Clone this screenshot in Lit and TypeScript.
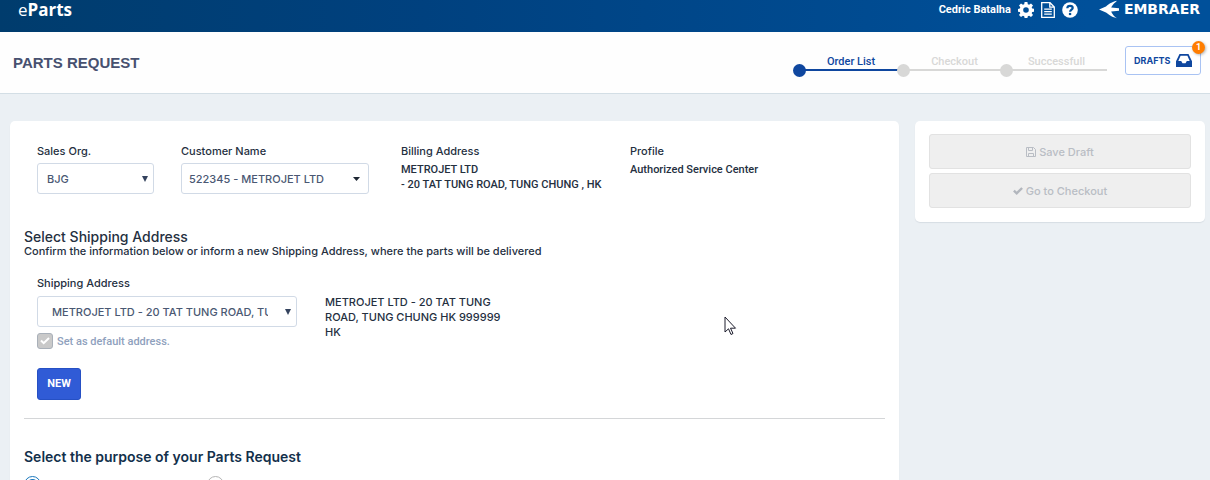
import { LitElement, html, css, svg } from "lit";
import { customElement, property } from "lit/decorators.js";
import { classMap } from "lit/directives/class-map.js";

const gearIcon = svg`<path fill="#fff" fill-rule="evenodd" d="M6.6 0h2.8l.4 2.2 1.3.5L13 1.4l2 2-1.3 1.9.5 1.3 2 .3v2.8l-2 .4-.5 1.2L15 13l-2 2-1.9-1.3-1.3.5-.4 1.8H6.600l-.4-1.800-1.300-.5L3 15l-2-2 1.300-1.700-.5-1.200L0 9.700V6.900l1.800-.3.5-1.300L1 3.400l2-2 1.900 1.300 1.300-.5zM8 5.200a2.800 2.800 0 1 0 0 5.600 2.800 2.800 0 0 0 0-5.600z"/>`;

@customElement("step-track")
export class StepTrack extends LitElement {
  @property({ type: Number }) current = 0;

  static styles = css`
    :host { display: block; }
    ol { list-style: none; margin: 0; padding: 0; display: grid; grid-template-columns: 104px 103px 101px; }
    li {
      position: relative;
      text-align: center;
      color: #d8d8d7;
      border-bottom: 2px solid #d8d8d7;
      font: 500 11px/14px Roboto, sans-serif;
    }
    li::before {
      content: "";
      position: absolute;
      left: -6px;
      bottom: -8px;
      width: 13px;
      height: 13px;
      border-radius: 50%;
      background: #d8d8d7;
    }
    .active { color: #0f479f; border-color: #0f479f; }
    .active::before { background: #0f479f; }
  `;

  render() {
    return html`<ol>
      ${["Order List", "Checkout", "Successfull"].map(
        (s, i) => html`<li class=${classMap({ active: i === this.current })}>${s}</li>`
      )}
    </ol>`;
  }
}

@customElement("app-root")
export class AppRoot extends LitElement {
  static styles = css`
    :host {
      display: block;
      height: 100vh;
      overflow: hidden;
      position: relative;
      background: #ebf0f4;
      color: #25303f;
      font: 500 11px/16px Inter, "Liberation Sans", sans-serif;
    }
    * { box-sizing: border-box; }
    svg { display: block; flex: none; }
    h1, h2, p { margin: 0; }
    button, select { font: inherit; color: inherit; }

    .top {
      display: flex;
      align-items: flex-start;
      justify-content: space-between;
      height: 32px;
      padding: 0 10px 0 18px;
      color: #fff;
      background: linear-gradient(90deg, #003c6d, #00417f 35%, #00509a 90%);
    }
    .brand { font: 400 17px/19px "Open Sans", sans-serif; color: #fff; text-decoration: none; }
    .brand b { font-weight: 700; }
    .tools { display: flex; align-items: center; height: 19px; gap: 7px; }
    .user { font: 700 11px/18px Roboto, sans-serif; }
    .tools a { color: inherit; text-decoration: none; }
    .logo { display: flex; align-items: center; gap: 5px; margin-left: 14px; font: 700 14px/19px "DejaVu Sans", sans-serif; }

    .bar {
      display: flex;
      align-items: center;
      height: 62px;
      padding: 0 9px 0 13px;
      background: #fefefe;
      border-bottom: 1px solid #d3dee5;
    }
    h1 { flex: 1; font: 700 15px/18px "Liberation Sans", sans-serif; color: #475170; }
    .drafts {
      position: relative;
      display: flex;
      align-items: center;
      justify-content: space-between;
      width: 76px;
      height: 29px;
      margin: 0 0 4px 18px;
      padding: 0 8px;
      border: 1px solid #a9c3f3;
      border-radius: 3px;
      background: #fff;
      color: #0f479f;
      font: 700 9px/12px Inter, sans-serif;
    }
    .badge {
      position: absolute;
      top: -6px;
      right: -5px;
      width: 13px;
      height: 13px;
      border-radius: 50%;
      background: #ff7d00;
      color: #fff;
      font: 700 9px/13px Roboto, sans-serif;
      box-shadow: 1px 1px 3px rgba(0, 0, 0, 0.3);
    }

    .layout {
      display: grid;
      grid-template-columns: minmax(0, 1fr) 290px;
      gap: 16px;
      align-items: start;
      padding: 27px 5px 0 10px;
    }
    .card { background: #fff; border-radius: 5px; box-shadow: 0 1px 1px rgba(40, 60, 80, 0.1); }
    .main { padding: 22px 14px 40px; }
    .side { display: grid; gap: 4px; padding: 13px 14px 14px; }
    .side button {
      display: flex;
      align-items: center;
      justify-content: center;
      gap: 3px;
      height: 35px;
      border: 1px solid #e2e2e2;
      border-radius: 3px;
      background: #efefef;
      color: #b9bdc4;
    }

    .account, .shipping { display: grid; padding-left: 13px; }
    .account { grid-template-columns: 144fr 220fr 229fr 255fr; }
    .shipping { grid-template-columns: 288fr 185fr 375fr; margin-top: 17px; }
    .label { display: block; color: #25303f; }
    .value { margin-top: 3px; font: 500 11px/15px Roboto, sans-serif; }
    .address { margin-top: 20px; line-height: 15px; }
    .pick { display: grid; align-items: center; margin: 4px 27px 0 0; }
    .wide { margin-right: 32px; }
    .ship { margin: 5px 28px 0 0; }
    .pick > * { grid-area: 1 / 1; }
    .pick svg { justify-self: end; margin-right: 6px; pointer-events: none; }
    .pick .caret { margin-right: 9px; }
    select {
      appearance: none;
      width: 100%;
      height: 31px;
      padding: 0 28px 0 9px;
      border: 1px solid #d1dae6;
      border-radius: 3px;
      background: #fff;
      color: #4a5873;
    }
    .wide select { padding-left: 7px; }
    .ship select { padding-left: 14px; }

    h2 { font: 500 14px/16px Inter, sans-serif; }
    .section { margin-top: 35px; }
    .hint { line-height: 13px; }
    .default { display: flex; align-items: flex-start; gap: 4px; margin-top: 6px; color: #8fa1bd; font: 500 11px/18px Roboto, sans-serif; }
    .tick { display: grid; }
    .tick > * { grid-area: 1 / 1; }
    .tick svg { place-self: center; pointer-events: none; }
    .tick input {
      appearance: none;
      width: 16px;
      height: 16px;
      margin: 0;
      border: 1px solid #a9b0b9;
      border-radius: 3px;
      background: #c9c9c9;
    }
    .new {
      width: 44px;
      height: 32px;
      margin: 17px 0 0 13px;
      padding: 0;
      border: 1px solid #2650c4;
      border-radius: 3px;
      background: #305bd6;
      color: #fff;
      font: 700 11px/16px Roboto, sans-serif;
    }
    hr { margin: 18px 0 30px; border: 0; border-top: 1px solid #d4d6d8; }
    .purpose { color: #12304b; font-weight: 600; }
    .choices { display: flex; gap: 166px; margin-top: 11px; }
    .choices input {
      appearance: none;
      width: 17px;
      height: 17px;
      margin: 0;
      border: 1px solid #b5b5b5;
      border-radius: 50%;
    }
    .choices input:checked { border-color: #1b78bd; background: radial-gradient(#1b78bd 5px, #fff 6px); }
    .pointer { position: absolute; left: 724px; top: 316px; }
  `;

  private arrow = html`<svg width="6" height="6" viewBox="0 0 7 7" aria-hidden="true"><path fill="#34435e" d="M0 0h7L3.500 7z"/></svg>`;

  render() {
    return html`
      <header class="top">
        <a class="brand" href="#">e<b>Parts</b></a>
        <div class="tools">
          <span class="user">Cedric Batalha</span>
          <a href="#" aria-label="Settings"><svg width="16" height="16" viewBox="0 0 16 16">${gearIcon}</svg></a>
          <a href="#" aria-label="Documents"><svg width="14" height="16" viewBox="0 0 14 16" fill="none" stroke="#fff"><path stroke-width="1.300" d="M.7.7h8.300l4.300 4.300v10.300H.7zM8.800.7V5.200h4.500"/><path stroke-width="1.200" d="M3.200 7.200h7.600M3.200 9.700h7.600M3.200 12.200h7.600"/></svg></a>
          <a href="#" aria-label="Help"><svg width="16" height="16" viewBox="0 0 16 16"><circle cx="8" cy="8" r="7.800" fill="#fff"/><path fill="none" stroke="#00509a" stroke-width="2.200" d="M5.300 6.200C5.400 4.500 6.500 3.900 8 3.900c1.600 0 2.700.8 2.700 2.100C10.700 7.600 8.100 7.700 8.100 9.800"/><path fill="#00509a" d="M6.900 10.900h2.300v2.200H6.900z"/></svg></a>
          <a class="logo" href="#"><svg width="20" height="19" viewBox="0 0 20 19"><path fill="#fff" d="M0 9.500 7 6.400C10 4.500 11.500 2.200 18 .8L16.500 2.200C14.200 4 13 5.800 12.200 7.600L20 8.200v2.600l-7.800.6c.8 1.800 2 3.800 4 5.600l1.700 1.300C11.500 16.800 10 14.500 7 12.600z"/></svg>EMBRAER</a>
        </div>
      </header>

      <section class="bar">
        <h1>PARTS REQUEST</h1>
        <step-track .current=${0}></step-track>
        <button class="drafts">DRAFTS
          <svg width="16" height="13" viewBox="0 0 16 13"><path fill="#0f479f" fill-rule="evenodd" d="M3.500 0h9L16 7.300V13H0V7.300zM4.600 1.800 2.300 7h2.900l1.300 2.300h3L10.800 7h2.900l-2.300-5.200z"/></svg>
          <span class="badge">1</span>
        </button>
      </section>

      <div class="layout">
        <main class="card main">
          <div class="account">
            <div>
              <label class="label" for="org">Sales Org.</label>
              <div class="pick"><select id="org"><option>BJG</option></select>${this.arrow}</div>
            </div>
            <div>
              <label class="label" for="customer">Customer Name</label>
              <div class="pick wide"><select id="customer"><option>522345 - METROJET LTD</option></select>
                <svg class="caret" width="7" height="4" viewBox="0 0 7 4" aria-hidden="true"><path fill="#1d2633" d="M0 0h7L3.500 4z"/></svg></div>
            </div>
            <div>
              <span class="label">Billing Address</span>
              <p class="value">METROJET LTD<br />- 20 TAT TUNG ROAD, TUNG CHUNG , HK</p>
            </div>
            <div>
              <span class="label">Profile</span>
              <p class="value">Authorized Service Center</p>
            </div>
          </div>

          <h2 class="section">Select Shipping Address</h2>
          <p class="hint">Confirm the information below or inform a new Shipping Address, where the parts will be delivered</p>
          <div class="shipping">
            <div>
              <label class="label" for="ship">Shipping Address</label>
              <div class="pick ship"><select id="ship"><option>METROJET LTD - 20 TAT TUNG ROAD, TUNG CHUNG HK 999999 HK</option></select>${this.arrow}</div>
              <label class="default"><span class="tick"><input type="checkbox" checked disabled /><svg width="10" height="8" viewBox="0 0 10 8"><path fill="none" stroke="#fff" stroke-width="2" d="m1 3.500 2.700 2.700L9 1"/></svg></span>Set as default address.</label>
            </div>
            <p class="address">METROJET LTD - 20 TAT TUNG ROAD, TUNG CHUNG HK 999999 HK</p>
          </div>
          <button class="new">NEW</button>
          <hr />
          <h2 class="purpose">Select the purpose of your Parts Request</h2>
          <div class="choices">
            <input type="radio" name="purpose" aria-label="First purpose" checked />
            <input type="radio" name="purpose" aria-label="Second purpose" />
          </div>
        </main>

        <aside class="card side">
          <button disabled><svg width="10" height="10" viewBox="0 0 10 10" fill="none" stroke="#b9bdc4"><path d="M.5.5h7l2 2v7h-9zM2.500.5v3h4v-3M2.500 9.500v-3h5v3"/></svg>Save Draft</button>
          <button disabled><svg width="10" height="8" viewBox="0 0 10 8"><path fill="none" stroke="#b2b6bd" stroke-width="2.400" d="m.9 3.600 2.800 2.700L9.100 1"/></svg>Go to Checkout</button>
        </aside>
      </div>
      <svg class="pointer" width="13" height="20" viewBox="0 0 13 20"><path fill="#fff" stroke="#1c1c2c" d="M1 1v15l3.500-3.200L7 18.500l2-1-2.500-5.300h5z"/></svg>
    `;
  }
}
